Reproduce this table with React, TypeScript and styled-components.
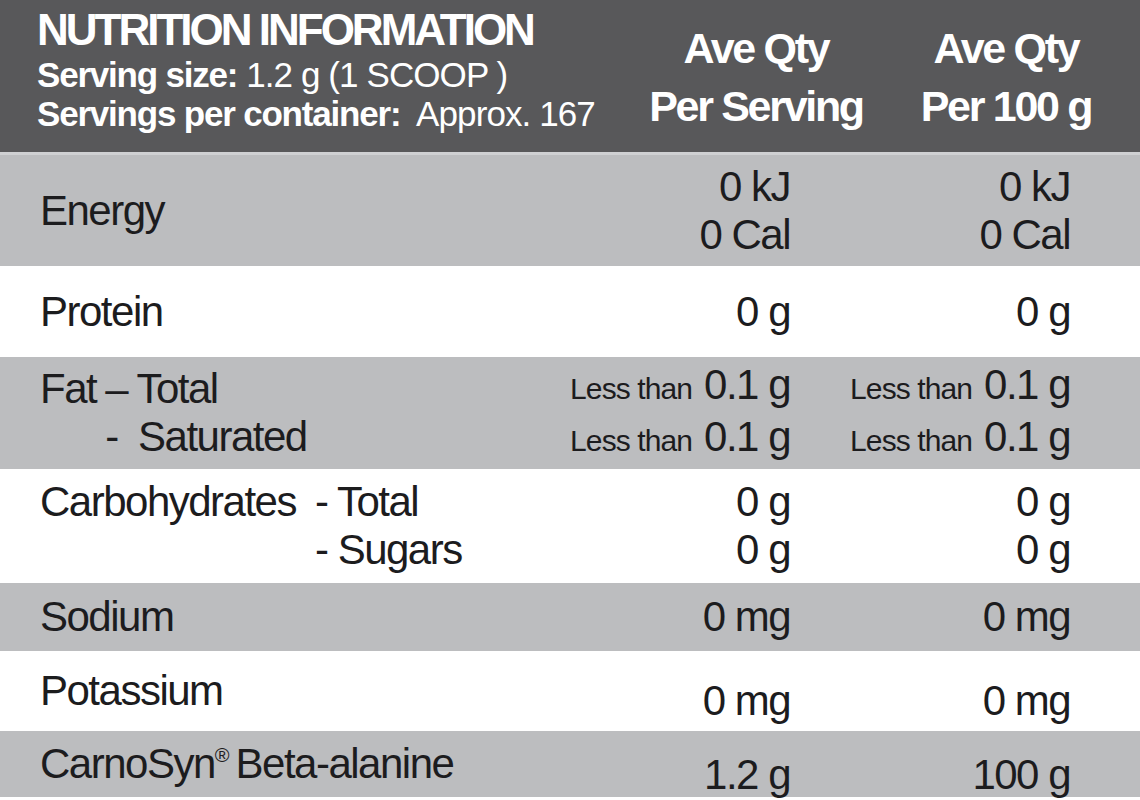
import React from 'react';
import styled, { createGlobalStyle } from 'styled-components';

const GlobalStyle = createGlobalStyle`
  html, body {
    margin: 0;
    padding: 0;
    background: #ffffff;
  }
  body {
    font-family: "Liberation Sans", Arial, sans-serif;
    color: #1c1c1e;
  }
`;

const Panel = styled.div`
  width: 1140px;
  height: 800px;
  overflow: hidden;
  background: #ffffff;
`;

const Header = styled.header`
  display: grid;
  grid-template-columns: 1fr 250px 250px;
  height: 152px;
  padding: 0 9px 0 37px;
  background: #58585a;
  border-bottom: 3px solid #cfd0d2;
  color: #ffffff;
`;

const Title = styled.div`
  padding-top: 5px;
`;

const TitleLine = styled.div`
  font-size: 44px;
  line-height: 50px;
  font-weight: 700;
  letter-spacing: -3px;
  white-space: nowrap;
`;

const ServingLine = styled.div`
  font-size: 35px;
  line-height: 39px;
  white-space: pre;
  letter-spacing: -0.9px;

  b {
    font-weight: 700;
    letter-spacing: -1.2px;
  }
`;

const ColumnHead = styled.div`
  padding-top: 19px;
  text-align: center;
  font-size: 43px;
  line-height: 58px;
  font-weight: 700;
  letter-spacing: -2.3px;
  white-space: nowrap;
`;

const Row = styled.div<{ $shade: 'grey' | 'white'; $height: number }>`
  display: grid;
  grid-template-columns: 1fr 250px 280px;
  align-items: center;
  height: ${p => p.$height}px;
  padding: 0 70px 0 40px;
  background: ${p => (p.$shade === 'grey' ? '#bcbdbf' : '#ffffff')};
  font-size: 42px;
  line-height: 48px;
  letter-spacing: -1.5px;
  white-space: nowrap;
`;

const Label = styled.div<{ $gap: number }>`
  display: flex;
  align-items: flex-start;
  gap: ${p => p.$gap}px;
`;

const SubList = styled.div`
  display: flex;
  flex-direction: column;
  white-space: pre;
`;

const Reg = styled.sup`
  font-size: 20px;
  line-height: 0;
  letter-spacing: 0;
  vertical-align: 16px;
  margin-right: 6px;
`;

const Values = styled.div<{ $drop: number }>`
  display: flex;
  flex-direction: column;
  align-items: flex-end;
  transform: translateY(${p => p.$drop}px);
`;

const Small = styled.span`
  font-size: 30px;
  letter-spacing: -0.9px;
  margin-right: 12px;
`;

type Nutrient = {
  shade: 'grey' | 'white';
  height: number;
  name: React.ReactNode;
  subs?: string[];
  gap?: number;
  perServing: string[];
  per100: string[];
  drop?: number;
};

const rows: Nutrient[] = [
  { shade: 'grey', height: 111, name: 'Energy', perServing: ['0 kJ', '0 Cal'], per100: ['0 kJ', '0 Cal'] },
  { shade: 'white', height: 91, name: 'Protein', perServing: ['0 g'], per100: ['0 g'] },
  {
    shade: 'grey',
    height: 112,
    name: 'Fat',
    subs: ['– Total', '-  Saturated'],
    gap: 9,
    perServing: ['<0.1 g', '<0.1 g'],
    per100: ['<0.1 g', '<0.1 g'],
  },
  {
    shade: 'white',
    height: 114,
    name: 'Carbohydrates',
    subs: ['- Total', '- Sugars'],
    gap: 19,
    perServing: ['0 g', '0 g'],
    per100: ['0 g', '0 g'],
  },
  { shade: 'grey', height: 68, name: 'Sodium', perServing: ['0 mg'], per100: ['0 mg'] },
  { shade: 'white', height: 80, name: 'Potassium', perServing: ['0 mg'], per100: ['0 mg'], drop: 10 },
  {
    shade: 'grey',
    height: 66,
    name: (
      <span>
        CarnoSyn<Reg>®</Reg>Beta-alanine
      </span>
    ),
    perServing: ['1.2 g'],
    per100: ['100 g'],
    drop: 11,
  },
];

const Amount: React.FC<{ value: string }> = ({ value }) =>
  value.startsWith('<') ? (
    <div>
      <Small>Less than</Small>
      {value.slice(1)}
    </div>
  ) : (
    <div>{value}</div>
  );

const App: React.FC = () => {
  return (
    <Panel>
      <GlobalStyle />
      <Header>
        <Title>
          <TitleLine>NUTRITION INFORMATION</TitleLine>
          <ServingLine>
            <b>Serving size:</b> 1.2 g (1 SCOOP )
          </ServingLine>
          <ServingLine>
            <b>Servings per container:</b>  Approx. 167
          </ServingLine>
        </Title>
        <ColumnHead>
          <div>Ave Qty</div>
          <div>Per Serving</div>
        </ColumnHead>
        <ColumnHead>
          <div>Ave Qty</div>
          <div>Per 100 g</div>
        </ColumnHead>
      </Header>

      {rows.map((row, i) => (
        <Row key={i} $shade={row.shade} $height={row.height}>
          <Label $gap={row.gap ?? 0}>
            <div>{row.name}</div>
            {row.subs && (
              <SubList>
                {row.subs.map(s => (
                  <div key={s}>{s}</div>
                ))}
              </SubList>
            )}
          </Label>
          <Values $drop={row.drop ?? 0}>
            {row.perServing.map((v, j) => (
              <Amount key={j} value={v} />
            ))}
          </Values>
          <Values $drop={row.drop ?? 0}>
            {row.per100.map((v, j) => (
              <Amount key={j} value={v} />
            ))}
          </Values>
        </Row>
      ))}
    </Panel>
  );
};

export default App;
